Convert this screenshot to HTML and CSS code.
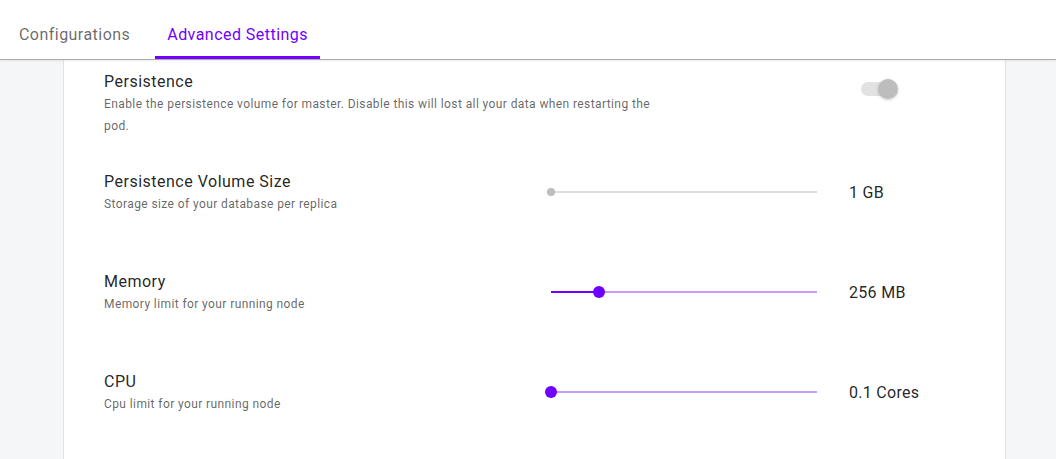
FILE: index.html
```html
<!DOCTYPE html>
<html>
<head>
<meta charset="utf-8">
<link rel="stylesheet" href="styles.css">
</head>
<body>
<div class="tabs">
  <div class="tab">Configurations</div>
  <div class="tab active">Advanced Settings</div>
</div>
<div class="main">
  <div class="panel">
    <div class="row">
      <div class="text wide">
        <div class="title">Persistence</div>
        <div class="desc">Enable the persistence volume for master. Disable this will lost all your data when restarting the pod.</div>
      </div>
      <div class="value toggle-cell">
        <div class="switch"><span class="track"></span><span class="thumb"></span></div>
      </div>
    </div>
    <div class="row">
      <div class="text">
        <div class="title">Persistence Volume Size</div>
        <div class="desc">Storage size of your database per replica</div>
      </div>
      <div class="slider-cell">
        <div class="slider disabled"><span class="rail"></span><span class="knob" style="left:0%"></span></div>
      </div>
      <div class="value">1 GB</div>
    </div>
    <div class="row">
      <div class="text">
        <div class="title">Memory</div>
        <div class="desc">Memory limit for your running node</div>
      </div>
      <div class="slider-cell">
        <div class="slider"><span class="rail"></span><span class="fill" style="width:18%"></span><span class="knob" style="left:18%"></span></div>
      </div>
      <div class="value">256 MB</div>
    </div>
    <div class="row">
      <div class="text">
        <div class="title">CPU</div>
        <div class="desc">Cpu limit for your running node</div>
      </div>
      <div class="slider-cell">
        <div class="slider"><span class="rail"></span><span class="knob" style="left:0%"></span></div>
      </div>
      <div class="value">0.1 Cores</div>
    </div>
  </div>
</div>
</body>
</html>
```
FILE: styles.css
```css
* { box-sizing: border-box; }
html, body { margin: 0; height: 100%; }
body {
  font-family: Roboto, "Liberation Sans", sans-serif;
  background: #f5f6f8;
  overflow: hidden;
}
.tabs {
  height: 60px;
  background: #fff;
  border-bottom: 1px solid #ababab;
  box-shadow: 0 1px 2px rgba(0,0,0,0.08);
  display: flex;
  padding-left: 7px;
  gap: 13px;
  position: relative;
  z-index: 1;
}
.tab {
  position: relative;
  padding: 10px 12px 0;
  display: flex;
  align-items: center;
  font-size: 16px;
  letter-spacing: 0.46px;
  color: rgba(0,0,0,0.6);
}
.tab.active { color: #7000ff; }
.tab.active::after {
  content: "";
  position: absolute;
  left: 0; right: 0; bottom: 0;
  height: 3px;
  background: #7000ff;
}
.main {
  height: calc(100% - 60px);
}
.panel {
  margin-left: 63px;
  width: 943px;
  height: 100%;
  background: #fff;
  border-left: 1px solid #e3e3e3;
  border-right: 1px solid #e3e3e3;
  padding: 10px 40px 0;
}
.row {
  height: 100px;
  display: grid;
  grid-template-columns: 447px 266px 1fr;
  align-items: start;
}
.text.wide { grid-column: 1 / 3; max-width: 560px; }
.title {
  font-size: 16px;
  line-height: 24px;
  letter-spacing: 0.5px;
  color: rgba(0,0,0,0.87);
}
.desc {
  margin-top: -1px;
  font-size: 12px;
  line-height: 22px;
  letter-spacing: 0.4px;
  color: rgba(0,0,0,0.62);
}
.slider-cell {
  height: 44px;
  display: flex;
  align-items: center;
}
.value {
  grid-column: 3;
  height: 44px;
  display: flex;
  align-items: center;
  padding-left: 32px;
  font-size: 16px;
  letter-spacing: 0.3px;
  color: rgba(0,0,0,0.87);
}
.slider {
  position: relative;
  width: 100%;
  height: 2px;
}
.slider .rail {
  position: absolute;
  inset: 0;
  background: #c69ef9;
}
.slider .fill {
  position: absolute;
  left: 0; top: 0; height: 2px;
  background: #7000ff;
}
.slider .knob {
  position: absolute;
  top: 1px;
  width: 12px; height: 12px;
  margin-left: -6px; margin-top: -6px;
  border-radius: 50%;
  background: #7000ff;
}
.slider.disabled .rail { background: #dedede; }
.slider.disabled .knob {
  width: 8px; height: 8px;
  margin-left: -4px; margin-top: -4px;
  background: #bdbdbd;
}
.value.toggle-cell {
  height: 38px;
  align-items: flex-start;
}
.switch {
  position: relative;
  width: 58px;
  height: 38px;
  padding: 12px;
}
.switch .track {
  display: block;
  width: 34px;
  height: 14px;
  border-radius: 7px;
  background: #e2e2e2;
}
.switch .thumb {
  position: absolute;
  left: 29px;
  top: 9px;
  width: 20px; height: 20px;
  border-radius: 50%;
  background: #bdbdbd;
  box-shadow: 0 1px 3px rgba(0,0,0,0.2);
}
```
